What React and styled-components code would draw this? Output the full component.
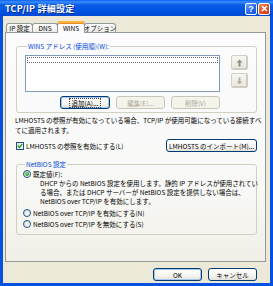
import React from 'react';
import styled, { createGlobalStyle, css } from 'styled-components';

const Global = createGlobalStyle`
  html, body {
    margin: 0;
    padding: 0;
    background: #ffffff;
  }
  body {
    font-family: "Noto Sans CJK JP", "Noto Sans", sans-serif;
    font-size: 6.5px;
    color: #000;
  }
  * { box-sizing: border-box; }
`;

const Window = styled.div`
  width: 273px;
  height: 286px;
  display: flex;
  flex-direction: column;
  overflow: hidden;
`;

const TitleBar = styled.div`
  height: 16px;
  flex: none;
  display: flex;
  align-items: center;
  justify-content: space-between;
  padding: 0 3px 0 5px;
  background: linear-gradient(to bottom, #0a5ef2 0%, #3a8ffc 12%, #0a5ce8 30%, #0054e3 70%, #0049d4 100%);
`;

const Title = styled.span`
  color: #fff;
  font-weight: bold;
  font-size: 9px;
  letter-spacing: 0.2px;
  text-shadow: 1px 1px 0 #0a2a8a;
`;

const Controls = styled.div`
  display: flex;
  gap: 1px;
  padding-top: 1px;
`;

const CaptionButton = styled.div`
  width: 12px;
  height: 12px;
  border: 1px solid #fff;
  border-radius: 2px;
  display: flex;
  align-items: center;
  justify-content: center;
  color: #fff;
  font-weight: bold;
  font-size: 9px;
  font-family: "Liberation Sans", sans-serif;
  background: ${({ $close }) =>
    $close
      ? 'linear-gradient(135deg, #f08a5e 0%, #e2562a 50%, #c8391a 100%)'
      : 'linear-gradient(135deg, #6fa2fa 0%, #2a6ef0 50%, #1b50d8 100%)'};
`;

const Client = styled.div`
  flex: 1;
  display: flex;
  flex-direction: column;
  background: #ece9d8;
  border: 3px solid #0851e0;
  border-top: none;
  padding: 5px 4px 0 2px;
`;

const TabStrip = styled.div`
  height: 12px;
  display: flex;
  align-items: flex-end;
  padding-left: 2px;
  margin-bottom: -1px;
  position: relative;
  z-index: 1;
`;

const Tab = styled.div`
  width: ${({ $w }) => $w}px;
  margin-left: -1px;
  display: flex;
  align-items: center;
  justify-content: center;
  border: 1px solid #919b9c;
  border-bottom: none;
  border-radius: 3px 3px 0 0;
  white-space: nowrap;
  ${({ $active }) =>
    $active
      ? css`
          height: 12px;
          background: #fcfcfe;
          border-top: 2px solid #ffb43c;
          box-shadow: inset 0 1px 0 #e68b2c;
          padding-bottom: 1px;
          position: relative;
          z-index: 1;
        `
      : css`
          height: 9px;
          margin-bottom: 1px;
          background: linear-gradient(to bottom, #ffffff, #ecebe6);
        `}
`;

const Panel = styled.div`
  height: 230px;
  flex: none;
  border: 1px solid #919b9c;
  background: linear-gradient(to bottom, #fcfcfe 0%, #f8f8f6 70%, #f1efe6 100%);
  padding: 9px 8px 0 10px;
  display: flex;
  flex-direction: column;
`;

const Group = styled.fieldset`
  margin: 0;
  height: ${({ $h }) => $h}px;
  border: 1px solid #d0d0bf;
  border-radius: 3px;
  padding: ${({ $pad }) => $pad};
  min-width: 0;
`;

const Legend = styled.legend`
  color: #0046d5;
  padding: 0 1px;
  margin-left: 2px;
  line-height: 8px;
  white-space: nowrap;
`;

const WinsRow = styled.div`
  display: flex;
`;

const WinsMain = styled.div`
  width: 195px;
  display: flex;
  flex-direction: column;
  gap: 4px;
`;

const ListBox = styled.div`
  height: 37px;
  border: 1px solid #7f9db9;
  background: #fff;
  padding: 1px;
`;

const FocusRow = styled.div`
  height: 6px;
  border: 1px dotted #6b6b6b;
`;

const ButtonRow = styled.div`
  display: flex;
  justify-content: flex-end;
  gap: 6px;
`;

const Button = styled.div`
  width: ${({ $w }) => $w}px;
  height: 13px;
  display: flex;
  align-items: center;
  justify-content: center;
  border: 1px solid #003c74;
  border-radius: 3px;
  background: linear-gradient(to bottom, #ffffff 0%, #f5f4ef 60%, #e3e2da 100%);
  white-space: nowrap;
  line-height: 8px;
  ${({ $focus }) =>
    $focus &&
    css`
      box-shadow: inset 0 0 0 1px #a8c6f2;
    `}
  ${({ $disabled }) =>
    $disabled &&
    css`
      border-color: #c9c7ba;
      background: #f5f4ea;
      color: #aca899;
    `}
`;

const FocusText = styled.span`
  outline: 1px dotted #444;
  outline-offset: 0;
  padding: 0 2px;
`;

const ArrowCol = styled.div`
  margin-left: 11px;
  display: flex;
  flex-direction: column;
  gap: 3px;
`;

const ArrowButton = styled.div`
  width: 17px;
  height: 15px;
  display: flex;
  align-items: center;
  justify-content: center;
  border: 1px solid #d0cfc3;
  border-radius: 2px;
  background: linear-gradient(to bottom, #f7f6f1, #e8e6dc);
  box-shadow: inset -1px -1px 0 #cfcdc0;
`;

const Note = styled.p`
  margin: 2px 0 0 -1px;
  line-height: 10px;
  white-space: nowrap;
`;

const CheckRow = styled.div`
  margin-top: 4px;
  display: flex;
  align-items: center;
  justify-content: space-between;
`;

const CheckLabel = styled.label`
  display: flex;
  align-items: center;
  gap: 2px;
  line-height: 8px;
`;

const CheckBox = styled.span`
  width: 8px;
  height: 8px;
  border: 1px solid #1c5180;
  background: linear-gradient(135deg, #dcdcd7, #ffffff);
  display: flex;
  align-items: center;
  justify-content: center;
`;

const NetbiosGroup = styled(Group)`
  margin-top: 8px;
`;

const RadioRow = styled.label`
  display: flex;
  align-items: center;
  gap: 2px;
  height: 8px;
  line-height: 8px;
  margin-top: ${({ $mt }) => $mt}px;
  white-space: nowrap;
`;

const Radio = styled.span`
  width: 8px;
  height: 8px;
  flex: none;
  border-radius: 50%;
  border: 1px solid #1c5180;
  background: linear-gradient(135deg, #dcdcd7, #ffffff);
  display: flex;
  align-items: center;
  justify-content: center;
  &::after {
    content: '';
    display: ${({ $on }) => ($on ? 'block' : 'none')};
    width: 4px;
    height: 4px;
    border-radius: 50%;
    background: radial-gradient(circle at 35% 35%, #7ad47a, #21a121 70%);
  }
`;

const Desc = styled.p`
  margin: 1px 0 0 17px;
  line-height: 9px;
  white-space: nowrap;
`;

const Footer = styled.div`
  display: flex;
  justify-content: flex-end;
  gap: 6px;
  padding: 6px 9px 0 0;
`;

const UpArrow = ({ color }) => (
  <svg width="7" height="8" viewBox="0 0 7 8">
    <path d="M3.5 0.5 L6.5 3.5 H4.5 V7.5 H2.5 V3.5 H0.5 Z" fill={color} />
  </svg>
);

const DownArrow = ({ color }) => (
  <svg width="7" height="8" viewBox="0 0 7 8">
    <path d="M3.5 7.5 L6.5 4.5 H4.5 V0.5 H2.5 V4.5 H0.5 Z" fill={color} />
  </svg>
);

export default function App() {
  return (
    <>
      <Global />
      <Window>
        <TitleBar>
          <Title>TCP/IP 詳細設定</Title>
          <Controls>
            <CaptionButton>?</CaptionButton>
            <CaptionButton $close>
              <svg width="7" height="7" viewBox="0 0 7 7">
                <path d="M1 1 L6 6 M6 1 L1 6" stroke="#fff" strokeWidth="1.6" />
              </svg>
            </CaptionButton>
          </Controls>
        </TitleBar>
        <Client>
          <TabStrip>
            <Tab $w={27}>IP 設定</Tab>
            <Tab $w={26}>DNS</Tab>
            <Tab $w={28} $active>WINS</Tab>
            <Tab $w={32}>オプション</Tab>
          </TabStrip>
          <Panel>
            <Group $h={71} $pad="5px 8px 0 8px">
              <Legend>WINS アドレス (使用順)(W):</Legend>
              <WinsRow>
                <WinsMain>
                  <ListBox>
                    <FocusRow />
                  </ListBox>
                  <ButtonRow>
                    <Button $w={50} $focus>
                      <FocusText>追加(A)...</FocusText>
                    </Button>
                    <Button $w={49} $disabled>編集(E)...</Button>
                    <Button $w={49} $disabled>削除(V)</Button>
                  </ButtonRow>
                </WinsMain>
                <ArrowCol>
                  <ArrowButton>
                    <UpArrow color="#8e8d84" />
                  </ArrowButton>
                  <ArrowButton>
                    <DownArrow color="#b5b3a6" />
                  </ArrowButton>
                </ArrowCol>
              </WinsRow>
            </Group>
            <Note>
              LMHOSTS の参照が有効になっている場合、TCP/IP が使用可能になっている接続すべ
              <br />
              てに適用されます。
            </Note>
            <CheckRow>
              <CheckLabel>
                <CheckBox>
                  <svg width="6" height="6" viewBox="0 0 6 6">
                    <path d="M0.8 2.8 L2.4 4.4 L5.2 1.2" stroke="#21a121" strokeWidth="1.4" fill="none" />
                  </svg>
                </CheckBox>
                LMHOSTS の参照を有効にする(L)
              </CheckLabel>
              <Button $w={91}>LMHOSTS のインポート(M)...</Button>
            </CheckRow>
            <NetbiosGroup $h={75} $pad="2px 6px 0 6px">
              <Legend>NetBIOS 設定</Legend>
              <RadioRow $mt={0}>
                <Radio $on />
                既定値(F):
              </RadioRow>
              <Desc>
                DHCP からの NetBIOS 設定を使用します。静的 IP アドレスが使用されてい
                <br />
                る場合、または DHCP サーバーが NetBIOS 設定を提供しない場合は、
                <br />
                NetBIOS over TCP/IP を有効にします。
              </Desc>
              <RadioRow $mt={3}>
                <Radio />
                NetBIOS over TCP/IP を有効にする(N)
              </RadioRow>
              <RadioRow $mt={3}>
                <Radio />
                NetBIOS over TCP/IP を無効にする(S)
              </RadioRow>
            </NetbiosGroup>
          </Panel>
          <Footer>
            <Button $w={49} $focus>OK</Button>
            <Button $w={49}>キャンセル</Button>
          </Footer>
        </Client>
      </Window>
    </>
  );
}
